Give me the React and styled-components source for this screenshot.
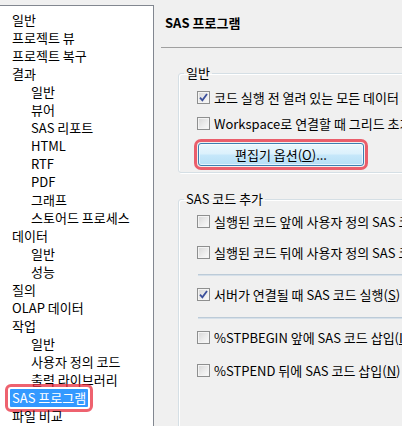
import React from 'react';
import styled, { createGlobalStyle } from 'styled-components';

const GlobalStyle = createGlobalStyle`
  html, body {
    margin: 0;
    padding: 0;
    width: 402px;
    height: 426px;
    overflow: hidden;
    background: #f0f0f0;
  }
  body {
    font-family: "Noto Sans CJK KR", "Liberation Sans", sans-serif;
    font-size: 13px;
    color: #000;
  }
`;

const Window = styled.div`
  display: flex;
  height: 426px;
`;

const Tree = styled.ul`
  flex: 0 0 154px;
  box-sizing: border-box;
  margin: 5px 0 0;
  padding: 4px 0 0;
  list-style: none;
  background: #fff;
  border-top: 1px solid #828790;
  border-right: 1px solid #828790;
`;

const TreeRow = styled.li`
  height: 18px;
  padding-left: ${(p) => (p.$child ? 29 : 10)}px;
`;

const TreeLabel = styled.span`
  display: inline-block;
  height: 18px;
  line-height: 18px;
  padding: 0 2px;
  white-space: nowrap;
  ${(p) =>
    p.$selected &&
    `
    background: #3399ff;
    color: #fff;
    outline: 3px solid rgba(232, 38, 56, 0.72);
    outline-offset: 2px;
    border-radius: 1px;
  `}
`;

const Main = styled.div`
  flex: 1;
  min-width: 0;
  overflow: hidden;
  padding-left: 7px;
`;

const Sheet = styled.div`
  width: 520px;
`;

const Header = styled.div`
  box-sizing: border-box;
  height: 48px;
  padding: 16px 0 0 4px;
  border-bottom: 1px solid #a0a0a0;
`;

const Title = styled.h1`
  margin: 0;
  font-size: 13px;
  line-height: 14px;
  font-weight: bold;
`;

const Group = styled.fieldset`
  margin: ${(p) => p.$top}px 0 0 17px;
  padding: 0 0 0 5px;
  border: 1px solid #d5dfe5;
  border-radius: 3px;
  box-shadow: inset 1px 1px 0 #fff, 1px 1px 0 #fff;
  min-width: 0;
`;

const Legend = styled.legend`
  padding: 0 2px;
  line-height: 14px;
`;

const Body = styled.div`
  padding: ${(p) => p.$pad};
  padding-left: 13px;
`;

const Row = styled.label`
  display: flex;
  align-items: center;
  height: 20px;
  margin-top: ${(p) => p.$gap || 0}px;
  white-space: nowrap;
`;

const Box = styled.span`
  flex: 0 0 13px;
  box-sizing: border-box;
  width: 13px;
  height: 13px;
  margin-right: 4px;
  border: 1px solid #8e8f8f;
  background: linear-gradient(135deg, #d6d6d6 0%, #ececec 55%, #fbfbfb 100%);
  box-shadow: inset 0 0 0 1px #f4f4f4;
  display: flex;
  align-items: center;
  justify-content: center;
`;

const Key = styled.u`
  text-decoration: underline;
`;

const Separator = styled.div`
  height: 2px;
  margin: ${(p) => p.$gap}px 0 0 1px;
  background: linear-gradient(#bccbd8 0 50%, #d6e0e9 50% 100%);
`;

const Button = styled.button`
  display: block;
  box-sizing: border-box;
  width: 166px;
  height: 23px;
  margin: 10px 0 0 1px;
  padding: 0;
  font: inherit;
  color: #000;
  border: 1px solid #3c7fb1;
  border-radius: 3px;
  background: linear-gradient(#ebf7fd 0%, #dcf1fc 45%, #c5e7fa 55%, #b6dff6 100%);
  box-shadow: inset 0 0 0 1px rgba(255, 255, 255, 0.65);
  outline: 3px solid rgba(232, 38, 56, 0.72);
  outline-offset: 1px;
`;

const Check = ({ checked, children, gap }) => (
  <Row $gap={gap}>
    <Box>
      {checked && (
        <svg width="9" height="9" viewBox="0 0 9 9">
          <path d="M1 4.6 L3.4 7.4 L8 1" fill="none" stroke="#3b4f9b" strokeWidth="1.8" />
        </svg>
      )}
    </Box>
    <span>{children}</span>
  </Row>
);

const treeItems = [
  ['일반', 0],
  ['프로젝트 뷰', 0],
  ['프로젝트 복구', 0],
  ['결과', 0],
  ['일반', 1],
  ['뷰어', 1],
  ['SAS 리포트', 1],
  ['HTML', 1],
  ['RTF', 1],
  ['PDF', 1],
  ['그래프', 1],
  ['스토어드 프로세스', 1],
  ['데이터', 0],
  ['일반', 1],
  ['성능', 1],
  ['질의', 0],
  ['OLAP 데이터', 0],
  ['작업', 0],
  ['일반', 1],
  ['사용자 정의 코드', 1],
  ['출력 라이브러리', 1],
  ['SAS 프로그램', 0, true],
  ['파일 비교', 0],
];

export default function App() {
  return (
    <>
      <GlobalStyle />
      <Window>
        <Tree>
          {treeItems.map(([label, level, selected], i) => (
            <TreeRow key={i} $child={level === 1}>
              <TreeLabel $selected={selected}>{label}</TreeLabel>
            </TreeRow>
          ))}
        </Tree>
        <Main>
          <Sheet>
            <Header>
              <Title>SAS 프로그램</Title>
            </Header>

            <Group $top={18}>
              <Legend>일반</Legend>
              <Body $pad="7px 0 6px">
                <Check checked>코드 실행 전 열려 있는 모든 데이터 세트 닫기(C)</Check>
                <Check gap={6}>Workspace로 연결할 때 그리드 초기화(W)</Check>
                <Button>
                  편집기 옵션(<Key>O</Key>)...
                </Button>
              </Body>
            </Group>

            <Group $top={19}>
              <Legend>SAS 코드 추가</Legend>
              <Body $pad="5px 0 80px">
                <Check>실행된 코드 앞에 사용자 정의 SAS 코드 삽입(B)</Check>
                <Check gap={11}>실행된 코드 뒤에 사용자 정의 SAS 코드 삽입(A)</Check>
                <Separator $gap={12} />
                <Check checked gap={8}>
                  서버가 연결될 때 SAS 코드 실행(<Key>S</Key>)
                </Check>
                <Separator $gap={13} />
                <Check gap={8}>%STPBEGIN 앞에 SAS 코드 삽입(<Key>I</Key>)</Check>
                <Check gap={13}>
                  %STPEND 뒤에 SAS 코드 삽입(<Key>N</Key>)
                </Check>
              </Body>
            </Group>
          </Sheet>
        </Main>
      </Window>
    </>
  );
}
